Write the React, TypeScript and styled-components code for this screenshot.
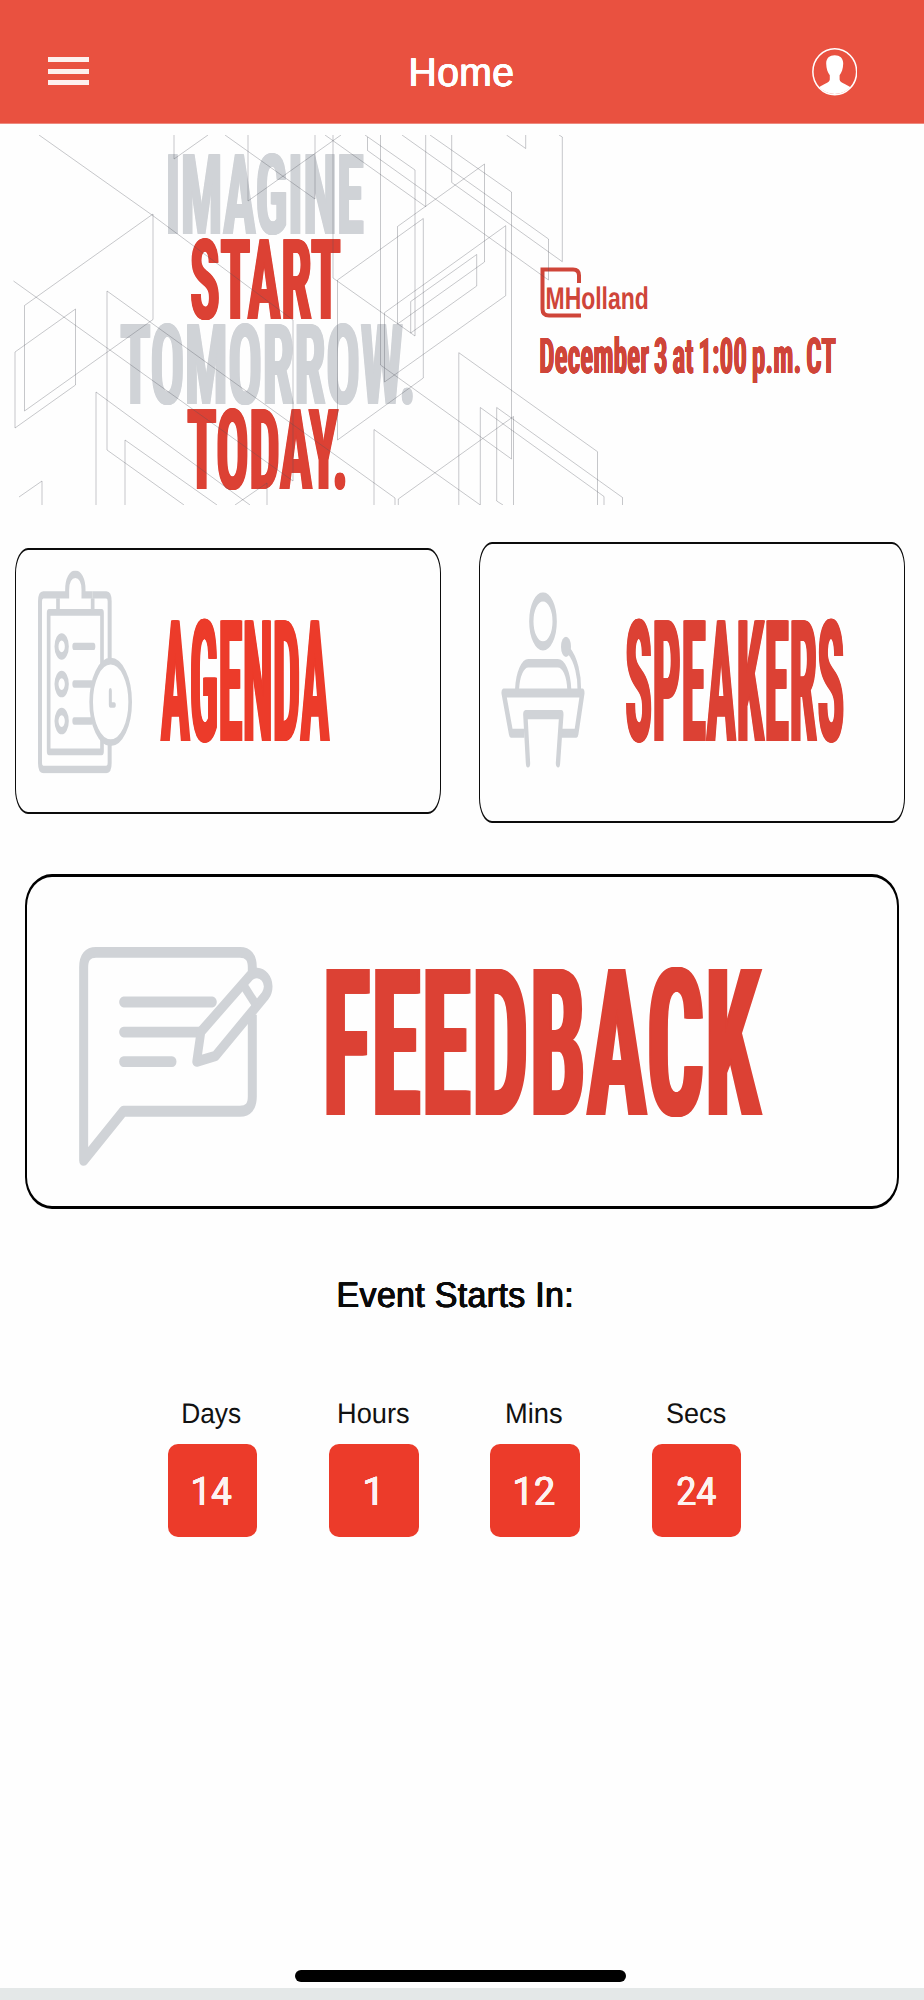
import React, { useLayoutEffect, useState } from 'react';
import styled, { createGlobalStyle } from 'styled-components';

const GlobalStyle = createGlobalStyle`
  * { box-sizing: border-box; }
  body { margin: 0; background: #fefefe; font-family: "Liberation Sans", Arial, sans-serif; }
  svg { display: block; flex: none; }
`;

const RED = '#dc4134';
const BRIGHT = '#ec3b2a';
const GRAY = '#d0d3d7';

/* ---------- condensed lettering, fitted to a width and a cap height ---------- */

type Face = 'display' | 'digits' | 'ui';
const faces = {
  display: { family: 'Roboto', cap: 0.711, shift: 0.0137, drop: 1, stretch: 'condensed' },
  digits: { family: 'Roboto', cap: 0.711, shift: 0.0137, drop: 0, stretch: 'normal' },
  ui: { family: 'Liberation Sans', cap: 0.688, shift: 0, drop: 0, stretch: 'normal' },
};

const FitBox = styled.div<{ $w: number; $h: number }>`
  width: ${(p) => p.$w}px;
  height: ${(p) => p.$h}px;
  flex: none;
`;

const FitInk = styled.span<{
  $face: Face;
  $size: number;
  $h: number;
  $weight: number;
  $color: string;
  $track: number;
  $space: number;
}>`
  display: block;
  width: max-content;
  white-space: pre;
  transform-origin: 0 50%;
  text-rendering: geometricPrecision;
  font-family: '${(p) => faces[p.$face].family}', sans-serif;
  font-stretch: ${(p) => faces[p.$face].stretch};
  font-size: ${(p) => p.$size}px;
  line-height: ${(p) => p.$h}px;
  font-weight: ${(p) => p.$weight};
  letter-spacing: ${(p) => p.$track}em;
  word-spacing: ${(p) => p.$space}em;
  color: ${(p) => p.$color};
`;

interface FitProps {
  text: string;
  width: number;
  cap: number;
  color: string;
  face?: Face;
  weight?: number;
  grow?: number;
  track?: number;
  space?: number;
}

function FitText({ text, width, cap, color, face = 'display', weight = 700, grow = 0, track = 0, space = 0 }: FitProps) {
  const f = faces[face];
  const size = cap / f.cap;
  const [fit, setFit] = useState({ k: 0.5, x: 0 });
  useLayoutEffect(() => {
    const ctx = document.createElement('canvas').getContext('2d')!;
    ctx.font = `normal normal ${weight} ${f.stretch} ${size}px "${f.family}"`;
    const m = ctx.measureText(text);
    const extra = ((text.length - 1) * track + (text.split(' ').length - 1) * space) * size;
    const k = (width - 2 * grow) / (m.actualBoundingBoxLeft + m.actualBoundingBoxRight + extra);
    setFit({ k, x: grow + m.actualBoundingBoxLeft * k });
  }, [text, width, size, weight, grow, track, space, f.family, f.stretch]);
  const g = grow / fit.k;
  const shadow = grow
    ? [g, g / 2, -g / 2, -g].map((o) => `${o.toFixed(2)}px 0 0 ${color}`).join(', ')
    : 'none';
  return (
    <FitBox $w={width} $h={cap}>
      <FitInk
        $face={face}
        $size={size}
        $h={cap}
        $weight={weight}
        $color={color}
        $track={track}
        $space={space}
        style={{
          transform: `translate(${fit.x}px, ${f.shift * size + f.drop}px) scaleX(${fit.k})`,
          textShadow: shadow,
        }}
      >
        {text}
      </FitInk>
    </FitBox>
  );
}

/* ---------- page ---------- */

const Page = styled.main`
  display: flex;
  flex-direction: column;
  width: 924px;
  height: 2000px;
  background: #fefefe;
  overflow: hidden;
`;

const Header = styled.header`
  display: grid;
  grid-template-columns: 1fr auto 1fr;
  align-items: center;
  height: 124px;
  padding: 20.5px 67px 0 48px;
  background: #e95140;
  border-bottom: 1px solid #ee8a7e;
  flex: none;
`;

const MenuButton = styled.div`
  display: flex;
  flex-direction: column;
  gap: 6.6px;
  margin-bottom: 1px;
`;

const MenuBar = styled.span`
  width: 41px;
  height: 5px;
  background: #fdf0ee;
`;

const TitleSlot = styled.div`
  padding: 2px 0 0 18px;
`;

const AvatarSlot = styled.div`
  justify-self: end;
`;

const Banner = styled.section`
  position: relative;
  display: grid;
  grid-template-columns: 532px 1fr;
  height: 370px;
  margin-top: 11px;
  flex: none;
`;

const BannerLines = styled.svg`
  position: absolute;
  left: 0;
  top: 0;
  pointer-events: none;
`;

const Slogan = styled.div`
  display: flex;
  flex-direction: column;
  align-items: center;
  gap: 5.3px;
  padding-top: 19.3px;
`;

const EventInfo = styled.div`
  display: flex;
  flex-direction: column;
  gap: 19.5px;
  padding: 132px 0 0 8px;
`;

const Logo = styled.div`
  display: grid;
  height: 51px;
  & > * { grid-area: 1 / 1; }
`;

const LogoName = styled.div`
  padding: 20.5px 0 0 7px;
`;

const CardRow = styled.section`
  display: flex;
  justify-content: space-between;
  align-items: flex-start;
  height: 281px;
  margin-top: 37px;
  padding: 0 19.5px 0 15px;
  flex: none;
`;

const Card = styled.div<{ $h: number; $pad: number; $gap: number; $drop?: number }>`
  display: flex;
  align-items: center;
  gap: ${(p) => p.$gap}px;
  width: 426px;
  height: ${(p) => p.$h}px;
  margin-top: ${(p) => p.$drop ?? 0}px;
  padding-left: ${(p) => p.$pad}px;
  border: solid #0c0c0c;
  border-width: 2px 1px;
  border-radius: 13px / 25px;
`;

const SpeakersCard = styled(Card)`
  padding-bottom: 3px;
`;

const WideCard = styled(Card)`
  width: 874.5px;
  margin: 51px 0 0 24.5px;
  border-color: #000;
  border-width: 3px 2px;
  border-radius: 27px / 32px;
  flex: none;
`;

const CardIcon = styled.div<{ $lift: number }>`
  transform: translateY(${(p) => -p.$lift}px);
`;

const Countdown = styled.section`
  display: flex;
  flex-direction: column;
  align-items: center;
  padding: 74px 15px 0 0;
  flex: none;
`;

const Units = styled.div`
  display: flex;
  gap: 71.6px;
  margin-top: 97px;
`;

const Unit = styled.div`
  display: flex;
  flex-direction: column;
  align-items: center;
  gap: 19.5px;
`;

const UnitBox = styled.div<{ $inset: number }>`
  display: flex;
  align-items: center;
  justify-content: center;
  width: 89.8px;
  height: 93px;
  padding: 2px ${(p) => p.$inset}px 0 0;
  border-radius: 10px;
  background: ${BRIGHT};
`;

const HomeIndicator = styled.div`
  width: 331px;
  height: 12.5px;
  margin: auto 0 6px 294.7px;
  border-radius: 7px;
  background: #000;
  flex: none;
`;

const BottomStrip = styled.div`
  height: 12px;
  background: #e4e8e8;
  flex: none;
`;

/* ---------- drawings ---------- */

const Avatar = () => (
  <svg width="45.5" height="47.7" viewBox="0 0 45.5 47.7" fill="none">
    <ellipse cx="22.75" cy="23.85" rx="21.9" ry="23" stroke="#fff" strokeWidth="1.5" />
    <path
      fill="#fff"
      d="M22.7 7.2C27.9 7.2 31.4 10.2 31.2 15.8C31.1 20.8 29.6 24.8 27.6 27.2V31.5C28.2 35.1 33 35.5 38.5 39.3A22 22 0 0 1 7 39.3C12.5 35.5 17.2 35.1 17.8 31.5V27.2C15.8 24.8 14.3 20.8 14.2 15.8C14 10.2 17.5 7.2 22.7 7.2Z"
    />
  </svg>
);

const lines = [
  'M39 135L152 215L293 320V481L13.5 281',
  'M153 214L24.5 305.5V411L153 319.5Z',
  'M75.5 309L15 352V428L75.5 385Z',
  'M184 505L107 450V291L395 498V505',
  'M96 505V392L250 505',
  'M125 505V440L217 505',
  'M19 497L42 481V505',
  'M235 505L267 483V505',
  'M174 135V159L208 135',
  'M225 135L315 199V135',
  'M248 135V201L341 135',
  'M325 135L425.7 206.7V135',
  'M365 135L415 170V336L333 278V135',
  'M367.5 137V150.5L548.5 280V239L402 135',
  'M380.5 135V365L511.5 459V192L430 135',
  'M337.5 280L423.3 218.5V378L337.5 440Z',
  'M397.5 226.5L484.5 164V262L397.5 324Z',
  'M476.7 254.5L410.7 301.5V333L476.7 286Z',
  'M505.7 225.7L384.5 312.7V382L505.7 295.7Z',
  'M451.7 135V182.5L562.3 261.7V137L559 135',
  'M506.5 135L525.7 148.5V135',
  'M458.8 505V352.7L597.5 451.7V505',
  'M374 505V429.5L480.3 505V407.5L604 496.5V505',
  'M503 505L496.7 501V407.5L622.5 497.5V505',
  'M398.3 505V499L513.5 416.5V505',
];

const LineArt = () => (
  <BannerLines width="640" height="370" viewBox="0 135 640 370" fill="none" stroke="#50555c" strokeOpacity="0.32" strokeWidth="1">
    {lines.map((d) => (
      <path key={d} d={d} />
    ))}
  </BannerLines>
);

const LogoBracket = () => (
  <svg width="42" height="51" viewBox="0 0 42 51" fill="none" stroke="#cf4539" strokeWidth="4">
    <path d="M39 16V8.5Q39 2.5 33 2.5H2.5V42Q2.5 48.5 9 48.5H41" />
  </svg>
);

const ClipboardIcon = () => (
  <svg width="94" height="203" viewBox="0 0 282 329" preserveAspectRatio="none" fill="none" stroke={GRAY} strokeWidth="12">
    <path d="M60 39.5H16Q6 39.5 6 50V312Q6 322.5 16 322.5H205Q215 322.5 215 312V50Q215 39.5 205 39.5H164" />
    <path d="M60 39.5H87.5V31C87.5 16 98 6 112 6S136.5 16 136.5 31V39.5H164" />
    <path d="M60 45V64M164 45V64" strokeWidth="11" />
    <rect x="32" y="68" width="160" height="226" rx="1" strokeWidth="11" />
    <circle cx="71" cy="123" r="15.5" />
    <circle cx="71" cy="184" r="15.5" />
    <circle cx="71" cy="244" r="15.5" />
    <path d="M109 123H166M109 184H160M109 244H160" strokeLinecap="round" />
    <ellipse cx="218" cy="213" rx="58.5" ry="66" fill="#fefefe" strokeWidth="11" />
    <path d="M217 195V218H229" strokeWidth="9" strokeLinecap="round" strokeLinejoin="round" />
  </svg>
);

const PodiumIcon = () => (
  <svg width="84" height="175.3" viewBox="0 0 252 250.5" preserveAspectRatio="none" fill="none" stroke={GRAY} strokeWidth="13" strokeLinejoin="round">
    <circle cx="126" cy="41.7" r="35" />
    <path d="M48 140C50 116 66 101.5 82 101.5H170C188 101.5 203 116 205 140" strokeWidth="12" />
    <ellipse cx="195" cy="78" rx="15" ry="14.5" fill={GRAY} stroke="none" />
    <path d="M204 84C225 96 236 120 235 140" strokeWidth="11" />
    <path d="M70 201.5H30L8 144H244L226 201.5H183" />
    <path d="M81 244L73 175H181L171 244" fill="#fefefe" strokeLinecap="round" />
  </svg>
);

const FeedbackIcon = () => (
  <svg width="194.3" height="219.3" viewBox="0 0 583 548" preserveAspectRatio="none" fill="none" stroke={GRAY} strokeWidth="27" strokeLinejoin="round">
    <path d="M520 170V374Q520 411 483 411H133L14 534V51Q14 14 51 14H483Q520 14 520 51V80" />
    <path d="M134 138H400M134 213H372M134 287H279" strokeLinecap="round" />
    <path d="M366 212L511 74A34 34 0 0 1 559 122L409 273L353 287Z" fill="#fefefe" strokeWidth="26" />
    <path d="M495 98L532 146" strokeWidth="24" />
  </svg>
);

const units = [
  { label: 'Days', value: '14', labelWidth: 58, valueWidth: 39, inset: 0 },
  { label: 'Hours', value: '1', labelWidth: 70.5, valueWidth: 13, inset: 5 },
  { label: 'Mins', value: '12', labelWidth: 55.5, valueWidth: 39.5, inset: 0 },
  { label: 'Secs', value: '24', labelWidth: 59, valueWidth: 39.5, inset: 0 },
];

export default function App() {
  return (
    <Page>
      <GlobalStyle />
      <Header>
        <MenuButton>
          <MenuBar />
          <MenuBar />
          <MenuBar />
        </MenuButton>
        <TitleSlot>
          <FitText text="Home" width={102} cap={27.7} color="#fff" face="ui" weight={400} grow={0.5} track={0.01} />
        </TitleSlot>
        <AvatarSlot>
          <Avatar />
        </AvatarSlot>
      </Header>

      <Banner>
        <Slogan>
          <FitText text="IMAGINE" width={196} cap={79.7} color={GRAY} grow={1} track={0.005} />
          <FitText text="START" width={150} cap={79.7} color={RED} grow={1} track={0.005} />
          <FitText text="TOMORROW." width={293} cap={79.7} color={GRAY} grow={1} track={0.005} />
          <FitText text="TODAY." width={158.5} cap={79.7} color={RED} grow={1} track={0.005} />
        </Slogan>
        <EventInfo>
          <Logo>
            <LogoBracket />
            <LogoName>
              <FitText text="MHolland" width={101} cap={21.5} color="#cf4539" face="ui" weight={700} />
            </LogoName>
          </Logo>
          <FitText text="December 3 at 1:00 p.m. CT" width={296} cap={35} color="#cf4539" grow={0.3} space={-0.06} />
        </EventInfo>
        <LineArt />
      </Banner>

      <CardRow>
        <Card $h={266} $pad={22} $gap={27.7} $drop={6}>
          <CardIcon $lift={9.5}>
            <ClipboardIcon />
          </CardIcon>
          <FitText text="AGENDA" width={170} cap={120.5} color={BRIGHT} grow={1.1} track={0.01} />
        </Card>
        <SpeakersCard $h={281} $pad={21.5} $gap={40.5}>
          <CardIcon $lift={0.8}>
            <PodiumIcon />
          </CardIcon>
          <FitText text="SPEAKERS" width={217.5} cap={120.5} color={RED} grow={1} track={0.01} />
        </SpeakersCard>
      </CardRow>

      <WideCard $h={335} $pad={52.5} $gap={52.7}>
        <CardIcon $lift={-14.8}>
          <FeedbackIcon />
        </CardIcon>
        <FitText text="FEEDBACK" width={437} cap={146} color={RED} grow={2.2} track={0.015} />
      </WideCard>

      <Countdown>
        <FitText text="Event Starts In:" width={233.5} cap={24.5} color="#0a0a0a" face="ui" weight={400} grow={0.5} track={0.01} />
        <Units>
          {units.map((u) => (
            <Unit key={u.label}>
              <FitText text={u.label} width={u.labelWidth} cap={19.5} color="#111" face="ui" weight={400} />
              <UnitBox $inset={u.inset}>
                <FitText text={u.value} width={u.valueWidth} cap={28} color="#fdf3f1" face="digits" weight={400} grow={0.3} />
              </UnitBox>
            </Unit>
          ))}
        </Units>
      </Countdown>

      <HomeIndicator />
      <BottomStrip />
    </Page>
  );
}
